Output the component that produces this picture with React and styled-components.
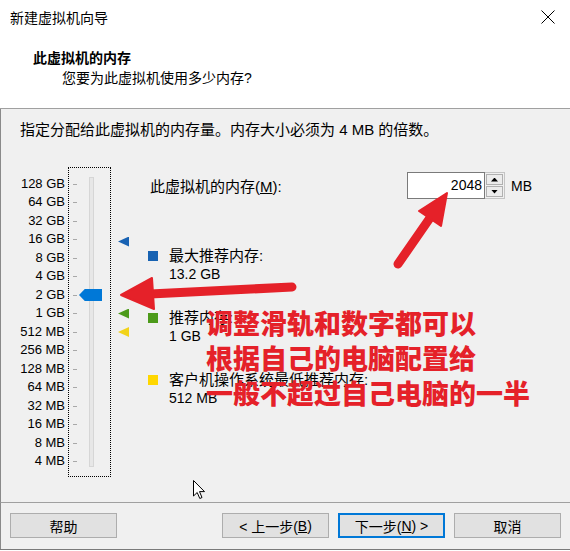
import React from 'react'
import styled, { createGlobalStyle } from 'styled-components'

const GlobalStyle = createGlobalStyle`
  html, body {
    margin: 0;
    padding: 0;
    background: #ffffff;
  }
  body {
    font-family: "Liberation Sans", "Noto Sans CJK SC", sans-serif;
    color: #000;
  }
`

const ROW = 18.5

const levels = [
  '128 GB', '64 GB', '32 GB', '16 GB', '8 GB', '4 GB', '2 GB', '1 GB',
  '512 MB', '256 MB', '128 MB', '64 MB', '32 MB', '16 MB', '8 MB', '4 MB',
]

const markers = { 3: '#1862b3', 7: '#4c9a1a', 8: '#f2d31a' }
const thumbIndex = 6

const Window = styled.div`
  position: relative;
  width: 570px;
  height: 549px;
  border-bottom: 1px solid #7a7a7a;
  display: flex;
  flex-direction: column;
  overflow: hidden;
`

const Header = styled.div`
  height: 108px;
  background: #fff;
  border-bottom: 1px solid #a0a0a0;
`

const TitleBar = styled.div`
  height: 34px;
  display: flex;
  align-items: center;
  justify-content: space-between;
  padding: 0 15px 0 10px;
  font-size: 14px;
`

const Headline = styled.div`
  margin: 14px 0 0 33px;
  font-size: 14px;
  font-weight: 700;
  line-height: 20px;
`

const Subline = styled.div`
  margin-left: 62px;
  font-size: 14px;
  line-height: 20px;
`

const Body = styled.div`
  flex: 1;
  background: #f0f0f0;
  border-left: 1px solid #8a8a8a;
  padding: 11px 0 0 19px;
`

const Instruction = styled.div`
  font-size: 15px;
  line-height: 20px;
`

const Content = styled.div`
  margin-top: 27px;
  display: flex;
  align-items: flex-start;
`

const LabelsCol = styled.div`
  width: 45px;
  padding-top: 7.75px;
`

const Label = styled.div`
  height: ${ROW}px;
  line-height: ${ROW}px;
  text-align: right;
  font-size: 13px;
  white-space: nowrap;
`

const SliderFrame = styled.div`
  position: relative;
  box-sizing: border-box;
  margin-left: 3px;
  width: 43px;
  height: 310px;
  border: 1px dotted #000;
  padding-top: 6.75px;
`

const TickRow = styled.div`
  height: ${ROW}px;
  display: flex;
  align-items: center;
  padding-left: 4px;
`

const Tick = styled.span`
  width: 4px;
  height: 1px;
  background: #a8a8a8;
`

const Track = styled.div`
  position: absolute;
  left: 20px;
  top: 9px;
  width: 5px;
  height: 290px;
  box-sizing: border-box;
  background: #e7e7e7;
  border: 1px solid #d6d6d6;
`

const Thumb = styled.div`
  position: absolute;
  left: 10px;
  width: 23px;
  height: 12px;
  background: #0078d7;
  clip-path: polygon(0 50%, 25% 0, 100% 0, 100% 100%, 25% 100%);
`

const MarkersCol = styled.div`
  margin-left: 5px;
  width: 16px;
  padding-top: 7.75px;
`

const MarkerRow = styled.div`
  height: ${ROW}px;
  display: flex;
  align-items: center;
  padding-left: 2px;
`

const Triangle = styled.span`
  width: 11px;
  height: 10px;
  background: ${p => p.$color};
  clip-path: polygon(0 50%, 100% 0, 100% 100%);
  transform: translateY(${p => p.$shift || 0}px);
`

const RightPanel = styled.div`
  flex: 1;
  margin-left: 16px;
  padding: 5px 38px 0 0;
`

const MemRow = styled.div`
  display: flex;
  align-items: center;
  height: 27px;
`

const MemLabel = styled.div`
  flex: 1;
  padding-left: 2px;
  font-size: 15px;
`

const SpinBox = styled.div`
  display: flex;
  height: 27px;
`

const Field = styled.div`
  box-sizing: border-box;
  width: 78px;
  height: 27px;
  background: #fff;
  border: 1px solid #7a7a7a;
  font-size: 14px;
  line-height: 25px;
  text-align: right;
  padding-right: 2px;
`

const SpinCol = styled.div`
  display: flex;
  flex-direction: column;
  width: 20px;
  height: 27px;
  border: 1px solid #c4c4c4;
  border-left: none;
  box-sizing: border-box;
  padding: 1px;
  gap: 1px;
`

const SpinButton = styled.div`
  flex: 1;
  background: #ececec;
  border: 1px solid #b0b0b0;
  display: flex;
  align-items: center;
  justify-content: center;
`

const Arrow = styled.span`
  width: 7px;
  height: 4px;
  background: #000;
  clip-path: ${p => (p.$up ? 'polygon(50% 0, 100% 100%, 0 100%)' : 'polygon(0 0, 100% 0, 50% 100%)')};
`

const Unit = styled.div`
  margin-left: 6px;
  font-size: 14px;
`

const Legend = styled.div`
  display: grid;
  grid-template-columns: 21px 1fr;
  margin-top: ${p => p.$gap}px;
  line-height: 19px;
`

const Swatch = styled.span`
  width: 10px;
  height: 10px;
  margin-top: 4.5px;
  background: ${p => p.$color};
`

const LegendTitle = styled.div`
  font-size: 15px;
`

const LegendValue = styled.div`
  grid-column: 2;
  font-size: 14px;
`

const Footer = styled.div`
  box-sizing: border-box;
  height: 47px;
  background: #f0f0f0;
  border-top: 1px solid #a0a0a0;
  border-left: 1px solid #8a8a8a;
  padding: 10px 9px 0 9px;
  display: flex;
  align-items: flex-start;
  gap: 9px;
`

const Button = styled.div`
  box-sizing: border-box;
  width: 107px;
  height: 25px;
  background: #e1e1e1;
  border: ${p => (p.$primary ? '2px solid #0078d7' : '1px solid #adadad')};
  font-size: 14px;
  display: flex;
  align-items: center;
  justify-content: center;
  margin-left: ${p => (p.$push ? 'auto' : '0')};
  white-space: nowrap;
`

const Note = styled.div`
  position: absolute;
  left: 206px;
  top: 305px;
  font-family: "Noto Sans CJK SC", sans-serif;
  font-size: 27px;
  font-weight: 900;
  line-height: 35px;
  color: #e52129;
  white-space: nowrap;
  pointer-events: none;
`

const Overlay = styled.svg`
  position: absolute;
  left: 0;
  top: 0;
  pointer-events: none;
`

const Cursor = styled.svg`
  position: absolute;
  left: 193px;
  top: 480px;
`

export default function App() {
  return (
    <>
      <GlobalStyle />
      <Window>
        <Header>
          <TitleBar>
            <span>新建虚拟机向导</span>
            <svg width="14" height="14" viewBox="0 0 14 14">
              <path d="M0.5 0.5 L13.5 13.5 M13.5 0.5 L0.5 13.5" stroke="#000" strokeWidth="1" />
            </svg>
          </TitleBar>
          <Headline>此虚拟机的内存</Headline>
          <Subline>您要为此虚拟机使用多少内存?</Subline>
        </Header>

        <Body>
          <Instruction>指定分配给此虚拟机的内存量。内存大小必须为 4 MB 的倍数。</Instruction>
          <Content>
            <LabelsCol>
              {levels.map(l => <Label key={l}>{l}</Label>)}
            </LabelsCol>
            <SliderFrame>
              <Track />
              {levels.map(l => <TickRow key={l}><Tick /></TickRow>)}
              <Thumb style={{ top: 6.75 + thumbIndex * ROW + ROW / 2 - 6 }} />
            </SliderFrame>
            <MarkersCol>
              {levels.map((l, i) => (
                <MarkerRow key={l}>
                  {markers[i] && <Triangle $color={markers[i]} $shift={i === 3 ? 2 : 0} />}
                </MarkerRow>
              ))}
            </MarkersCol>
            <RightPanel>
              <MemRow>
                <MemLabel>此虚拟机的内存(<u>M</u>):</MemLabel>
                <SpinBox>
                  <Field>2048</Field>
                  <SpinCol>
                    <SpinButton><Arrow $up /></SpinButton>
                    <SpinButton><Arrow /></SpinButton>
                  </SpinCol>
                </SpinBox>
                <Unit>MB</Unit>
              </MemRow>
              <Legend $gap={47}>
                <Swatch $color="#1762b2" />
                <LegendTitle>最大推荐内存:</LegendTitle>
                <LegendValue>13.2 GB</LegendValue>
              </Legend>
              <Legend $gap={24}>
                <Swatch $color="#4c9a1a" />
                <LegendTitle>推荐内存:</LegendTitle>
                <LegendValue>1 GB</LegendValue>
              </Legend>
              <Legend $gap={24}>
                <Swatch $color="#ffd700" />
                <LegendTitle>客户机操作系统最低推荐内存:</LegendTitle>
                <LegendValue>512 MB</LegendValue>
              </Legend>
            </RightPanel>
          </Content>
        </Body>

        <Footer>
          <Button>帮助</Button>
          <Button $push>&lt; 上一步(<u>B</u>)</Button>
          <Button $primary>下一步(<u>N</u>) &gt;</Button>
          <Button>取消</Button>
        </Footer>

        <Overlay width="570" height="551" viewBox="0 0 570 551">
          <g fill="#e52129" stroke="#e52129">
            <line x1="398" y1="264" x2="432" y2="215" strokeWidth="9" strokeLinecap="round" />
            <polygon points="447,193 419,211 441,226" strokeWidth="2" strokeLinejoin="round" />
            <line x1="292" y1="287" x2="150" y2="294" strokeWidth="9" strokeLinecap="round" />
            <polygon points="121,295 152,278 154,309" strokeWidth="2" strokeLinejoin="round" />
          </g>
        </Overlay>

        <Note>
          <div>调整滑轨和数字都可以</div>
          <div>根据自己的电脑配置给</div>
          <div>一般不超过自己电脑的一半</div>
        </Note>

        <Cursor width="13" height="20" viewBox="0 0 13 20">
          <path d="M0.5 0.5 L0.5 16 L4.2 12.5 L6.8 18.5 L9 17.5 L6.5 11.6 L11.5 11.6 Z" fill="#fff" stroke="#000" strokeWidth="1" strokeLinejoin="round" />
        </Cursor>
      </Window>
    </>
  )
}
